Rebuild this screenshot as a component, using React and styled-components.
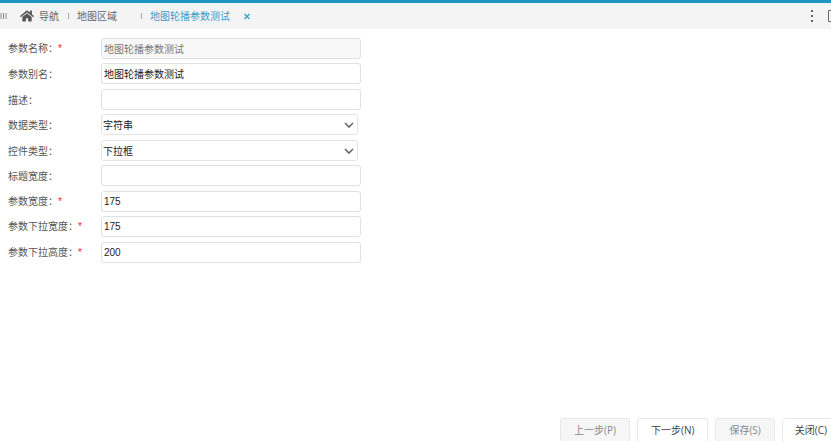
import { useState } from "react";
import styled, { createGlobalStyle } from "styled-components";
import { FaHome } from "react-icons/fa";

const GlobalStyle = createGlobalStyle`
  * {
    box-sizing: border-box;
  }

  body {
    margin: 0;
    background: #fff;
    color: #555;
    font-family: "Open Sans", "Noto Sans CJK SC", sans-serif;
    font-size: 10px;
    line-height: 20px;
  }

  input,
  select,
  button {
    font: inherit;
  }
`;

const Page = styled.div`
  display: flex;
  flex-direction: column;
  min-height: 100vh;
  overflow: hidden;
`;

const TopBar = styled.header`
  display: flex;
  align-items: center;
  height: 29px;
  border-top: 3px solid #1e94c4;
  background: #f4f4f4;
`;

const Tabs = styled.nav`
  display: flex;
  align-items: center;
  flex: 1;
`;

const IconButton = styled.button`
  display: flex;
  flex: none;
  padding: 0;
  border: 0;
  background: none;
  color: ${(props) => props.$color || "#666"};
`;

const Tab = styled.a`
  display: flex;
  align-items: center;
  gap: 5px;
  margin-left: ${(props) => (props.$home ? "12px" : "8px")};
  color: ${(props) => (props.$active ? "#3a9cc7" : "#666")};
  text-decoration: none;
`;

const Divider = styled.span`
  width: 1px;
  height: 6px;
  margin-left: ${(props) => (props.$wide ? "24px" : "9px")};
  background: #aaa;
`;

const Tools = styled.div`
  display: flex;
  gap: 13px;
  margin-right: -10px;
`;

const Form = styled.form`
  flex: 1;
  padding: 9px 8px;
`;

const Row = styled.div`
  display: flex;
  align-items: center;
  height: 21px;
  margin-bottom: 4px;

  &:nth-child(even) {
    margin-bottom: 5px;
  }
`;

const Label = styled.label`
  width: 93px;
  white-space: nowrap;
`;

const Required = styled.span`
  color: #f22;
  font-family: "Liberation Sans", sans-serif;
`;

const Input = styled.input`
  width: 260px;
  height: 21px;
  padding: 0 2px;
  border: 1px solid #e0e0e0;
  border-radius: 3px;
  outline: none;
  background: #fff;
  color: #222;
  font-family: "Liberation Sans", "Noto Sans CJK SC", sans-serif;

  &:disabled {
    background: #f8f8f8;
    color: #777;
  }
`;

const SelectBox = styled.div`
  display: grid;
  align-items: center;
  width: 257px;

  > * {
    grid-area: 1 / 1;
  }

  svg {
    justify-self: end;
    margin-right: 4px;
    pointer-events: none;
  }
`;

const Select = styled.select`
  width: 100%;
  height: 21px;
  padding: 0 1px 2px;
  border: 1px solid #e4e4e4;
  border-radius: 3px;
  appearance: none;
  background: #fff;
  color: #222;
`;

const Footer = styled.footer`
  display: flex;
  justify-content: flex-end;
  gap: 7px;
  margin: 0 -9px -1px 0;
`;

const Button = styled.button`
  height: 24px;
  padding: 0 13px;
  border: 1px solid #e8e8e8;
  border-radius: 3px;
  background: #fff;
  color: #444;
  white-space: nowrap;

  &:last-child {
    padding: 0 12px;
  }

  &:disabled {
    background: #f6f6f6;
    color: #888;
  }
`;

const fields = [
  { id: "name", label: "参数名称", value: "地图轮播参数测试", required: true, disabled: true },
  { id: "alias", label: "参数别名", value: "地图轮播参数测试" },
  { id: "desc", label: "描述", value: "" },
  { id: "dataType", label: "数据类型", value: "字符串", options: ["字符串"] },
  { id: "controlType", label: "控件类型", value: "下拉框", options: ["下拉框"] },
  { id: "titleWidth", label: "标题宽度", value: "" },
  { id: "width", label: "参数宽度", value: "175", required: true },
  { id: "dropWidth", label: "参数下拉宽度", value: "175", required: true },
  { id: "dropHeight", label: "参数下拉高度", value: "200", required: true },
];

function Field({ field, value, onChange }) {
  const props = {
    id: field.id,
    value,
    onChange: (e) => onChange(field.id, e.target.value),
  };

  return (
    <Row>
      <Label htmlFor={field.id}>
        {field.label}：{field.required && <Required>*</Required>}
      </Label>
      {field.options ? (
        <SelectBox>
          <Select {...props}>
            {field.options.map((option) => (
              <option key={option}>{option}</option>
            ))}
          </Select>
          <svg width="10" height="6" viewBox="0 0 10 6" fill="none">
            <path d="M1 1l4 4 4-4" stroke="#666" strokeWidth="1.6" />
          </svg>
        </SelectBox>
      ) : (
        <Input {...props} disabled={field.disabled} />
      )}
    </Row>
  );
}

export default function App() {
  const [values, setValues] = useState(
    Object.fromEntries(fields.map((field) => [field.id, field.value]))
  );

  const handleChange = (id, value) => setValues({ ...values, [id]: value });

  return (
    <Page>
      <GlobalStyle />
      <TopBar>
        <Tabs>
          <IconButton aria-label="菜单">
            <svg width="8" height="8" viewBox="0 0 8 8">
              <path d="M1 1v6M3.5 1v6M6 1v6" stroke="#888" />
            </svg>
          </IconButton>
          <Tab $home href="#home">
            <FaHome size={14} color="#555" />
            导航
          </Tab>
          <Divider />
          <Tab href="#area">地图区域</Tab>
          <Divider $wide />
          <Tab $active href="#param">
            地图轮播参数测试
          </Tab>
          <IconButton aria-label="关闭标签" $color="#3a9cc7">
            <svg width="34" height="8" viewBox="0 0 34 8">
              <path
                d="M14.5 2l5 5m0-5l-5 5"
                stroke="currentColor"
                strokeWidth="1.3"
              />
            </svg>
          </IconButton>
        </Tabs>
        <Tools>
          <IconButton aria-label="更多">
            <svg width="4" height="14" viewBox="0 0 4 14" fill="#666">
              <path d="M1 1h2v2H1zM1 6h2v2H1zM1 11h2v2H1z" />
            </svg>
          </IconButton>
          <IconButton aria-label="窗口">
            <svg width="14" height="14" viewBox="0 0 14 14" fill="none">
              <path d="M1.5 1.5h11v11h-11z" stroke="#667" />
            </svg>
          </IconButton>
        </Tools>
      </TopBar>
      <Form>
        {fields.map((field) => (
          <Field
            key={field.id}
            field={field}
            value={values[field.id]}
            onChange={handleChange}
          />
        ))}
      </Form>
      <Footer>
        <Button disabled>上一步(P)</Button>
        <Button>下一步(N)</Button>
        <Button disabled>保存(S)</Button>
        <Button>关闭(C)</Button>
      </Footer>
    </Page>
  );
}
